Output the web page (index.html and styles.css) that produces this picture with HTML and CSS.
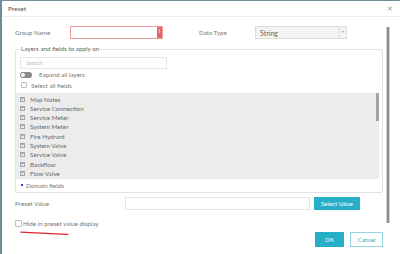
FILE: index.html
```html
<!DOCTYPE html>
<html lang="en">
  <head>
    <meta charset="UTF-8" />
    <title>Preset</title>
    <link rel="stylesheet" href="styles.css">
  </head>
  <body>
    <div class="dialog">
      <div class="dialog-header">
        <span class="title">Preset</span>
        <span class="close">&#x2715;</span>
      </div>

      <div class="dialog-main">
        <div class="content">
          <!-- Group name / data type -->
          <div class="row top-row">
            <label class="label group-label">Group Name</label>
            <div class="input invalid">
              <span class="alert">!</span>
            </div>
            <label class="label type-label">Data Type</label>
            <div class="select">
              <span class="select-text">String</span>
              <span class="select-arrow"></span>
            </div>
          </div>

          <!-- Layers and fields -->
          <fieldset class="layers">
            <legend>Layers and fields to apply on</legend>
            <div class="search">Search</div>
            <div class="option toggle-row">
              <span class="toggle"><span class="knob"></span></span>
              <span>Expand all layers</span>
            </div>
            <div class="option check-row">
              <span class="checkbox small"></span>
              <span>Select all fields</span>
            </div>
            <div class="layer-list">
              <ul class="items">
                <li><span class="plus">+</span>Map Notes</li>
                <li><span class="plus">+</span>Service Connection</li>
                <li><span class="plus">+</span>Service Meter</li>
                <li><span class="plus">+</span>System Meter</li>
                <li><span class="plus">+</span>Fire Hydrant</li>
                <li><span class="plus">+</span>System Valve</li>
                <li><span class="plus">+</span>Service Valve</li>
                <li><span class="plus">+</span>Backflow</li>
                <li><span class="plus">+</span>Flow Valve</li>
                <li class="peek"><span class="plus"></span></li>
              </ul>
              <div class="list-scroll"></div>
            </div>
            <div class="option domain-row">
              <span class="dot"></span>
              <span>Domain fields</span>
            </div>
          </fieldset>

          <!-- Preset value -->
          <div class="row value-row">
            <label class="label value-label">Preset Value</label>
            <div class="input value-input"></div>
            <button class="btn btn-primary select-btn">Select Value</button>
          </div>

          <div class="option hide-row">
            <span class="checkbox"></span>
            <span>Hide in preset value display</span>
          </div>

          <div class="footer">
            <svg class="underline" width="50" height="5" viewBox="0 0 50 5">
              <path d="M1 1.2 C 15 1.8, 32 2.6, 48 3.4" stroke="#e0262b" stroke-width="1.3" fill="none" stroke-linecap="round" />
            </svg>
            <div class="actions">
              <button class="btn btn-primary ok-btn">OK</button>
              <button class="btn btn-secondary cancel-btn">Cancel</button>
            </div>
          </div>
        </div>
        <div class="scrollbar"></div>
      </div>
    </div>
  </body>
</html>
```

FILE: styles.css
```css
* {
  box-sizing: border-box;
  margin: 0;
  padding: 0;
  font-family: "Lato", "Open Sans", sans-serif;
}
body {
  background: #6f8e94;
  width: 400px;
  height: 254px;
  overflow: hidden;
}
.dialog {
  margin: 1px 0 0 2px;
  width: 398px;
  height: 253px;
  background: #fff;
  color: #777;
  font-size: 6.3px;
}
.dialog-header {
  height: 16px;
  display: flex;
  align-items: center;
  justify-content: space-between;
  padding: 0 7px 0 6px;
  border-bottom: 1px solid #ececec;
}
.title {
  color: #555;
  font-size: 6.5px;
}
.close {
  color: #999;
  font-size: 7px;
}
.dialog-main {
  display: flex;
}
.content {
  width: 384px;
  padding: 0 3px 0 13px;
}
.scrollbar {
  width: 4px;
  height: 196px;
  margin-top: 10px;
  background: #8c8c8c;
  border-left: 1px solid #d4d4d4;
  border-right: 1px solid #d4d4d4;
}
.row {
  display: flex;
  align-items: center;
}
.label {
  color: #7a7a7a;
  font-size: 6.3px;
}
.top-row {
  margin-top: 9px;
  height: 13px;
}
.group-label {
  width: 55px;
}
.input {
  height: 13px;
  border: 1px solid #e6e6e6;
  background: #fff;
}
.input.invalid {
  width: 93px;
  border-color: #ec9a9a;
  display: flex;
  justify-content: flex-end;
}
.alert {
  width: 5px;
  height: 100%;
  background: #df6a6a;
  color: #fff;
  font-size: 5px;
  font-weight: bold;
  text-align: center;
  line-height: 8px;
}
.type-label {
  margin-left: 36px;
  width: 56px;
}
.select {
  width: 92px;
  height: 13px;
  display: flex;
  align-items: center;
  justify-content: space-between;
  background: #f3f3f3;
  border: 1px solid #dcdcdc;
}
.select-text {
  padding-left: 4px;
  color: #666;
  font-size: 7px;
}
.select-arrow {
  width: 7px;
  height: 100%;
  border-left: 1px solid #e2e2e2;
  position: relative;
}
.select-arrow::after {
  content: "";
  position: absolute;
  left: 2px;
  top: 4px;
  border-left: 1.5px solid transparent;
  border-right: 1.5px solid transparent;
  border-top: 2px solid #9aaec0;
}
.layers {
  margin-top: 6px;
  border: 1px solid #dfe2e8;
  border-radius: 2px;
  padding: 0 0 3px 0;
}
.layers legend {
  margin-left: 4px;
  padding: 0 1px;
  line-height: 8px;
  font-size: 6.3px;
  color: #666;
}
.search {
  margin: 4px 0 0 4px;
  width: 147px;
  height: 12px;
  border: 1px solid #e6e6e6;
  padding-left: 5px;
  font-size: 5.8px;
  font-style: italic;
  color: #bbb;
  line-height: 10px;
}
.option {
  display: flex;
  align-items: center;
  height: 7px;
  font-size: 6.3px;
  color: #777;
}
.toggle-row {
  margin: 2px 0 0 4px;
  gap: 7px;
}
.toggle {
  width: 12px;
  height: 6px;
  border-radius: 3px;
  background: #8a8a8a;
  display: flex;
  align-items: center;
  padding-left: 1px;
}
.knob {
  width: 4px;
  height: 4px;
  border-radius: 50%;
  background: #fff;
}
.check-row {
  margin: 3.5px 0 0 5px;
  gap: 4px;
}
.checkbox {
  width: 7px;
  height: 7px;
  border: 1px solid #bdbdbd;
  border-radius: 1px;
  background: #fff;
}
.checkbox.small {
  width: 6px;
  height: 6px;
}
.layer-list {
  margin: 4.5px 3px 0 0;
  height: 86px;
  background: #ececec;
  overflow: hidden;
  display: flex;
}
.items {
  flex: 1;
  list-style: none;
  padding-top: 1.4px;
}
.items li {
  height: 9.3px;
  display: flex;
  align-items: center;
  padding-left: 4px;
  font-size: 6.3px;
  color: #6a6a6a;
}
.plus {
  width: 5px;
  height: 5px;
  border: 1px solid #a5a5a5;
  margin-right: 5px;
  font-size: 5px;
  line-height: 3px;
  text-align: center;
  color: #888;
}
.list-scroll {
  width: 2.5px;
  height: 28px;
  background: #a3a3a3;
  margin-right: 0.5px;
}
.domain-row {
  margin: 2.5px 0 0 5px;
  gap: 3px;
}
.dot {
  width: 2px;
  height: 2px;
  background: #2a4ee0;
}
.value-row {
  margin-top: 4px;
  height: 13px;
}
.value-label {
  width: 110px;
}
.value-input {
  width: 185px;
}
.btn {
  border: none;
  font-size: 6px;
  cursor: pointer;
}
.btn-primary {
  background: #27afc8;
  color: #fff;
}
.btn-secondary {
  background: #fff;
  color: #2aa9c3;
  border: 1px solid #92d6e3;
}
.select-btn {
  margin-left: 4px;
  width: 46px;
  height: 13px;
}
.hide-row {
  margin-top: 10px;
  gap: 1px;
}
.footer {
  margin-top: 5.5px;
  display: flex;
  justify-content: space-between;
  align-items: flex-start;
}
.underline {
  margin: -1px 0 0 5px;
}
.actions {
  display: flex;
  gap: 6px;
}
.ok-btn {
  width: 29px;
  height: 15px;
}
.cancel-btn {
  width: 33px;
  height: 15px;
}
```
